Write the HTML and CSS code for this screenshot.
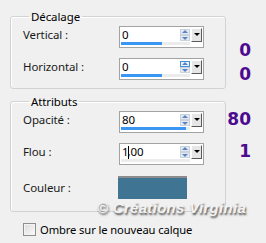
FILE: index.html
```html
<!DOCTYPE html>
<html lang="fr">
<head>
    <meta charset="UTF-8">
    <title>Ombre portée</title>
    <link rel="stylesheet" href="styles.css">
</head>
<body>
    <div class="dialog">
        <div class="groups">
            <!-- Décalage -->
            <fieldset class="group group-offset">
                <legend>Décalage</legend>
                <div class="row">
                    <span class="label">Vertical :</span>
                    <div class="spin">
                        <div class="spin-top">
                            <span class="spin-text">0</span>
                            <span class="arrows"><i class="up"></i><i class="down"></i></span>
                            <span class="drop"></span>
                        </div>
                        <div class="track"><div class="fill" style="width: 41px"></div></div>
                    </div>
                </div>
                <div class="row">
                    <span class="label">Horizontal :</span>
                    <div class="spin">
                        <div class="spin-top">
                            <span class="spin-text">0</span>
                            <span class="arrows hot"><i class="up"></i><i class="down"></i></span>
                            <span class="drop"></span>
                        </div>
                        <div class="track"><div class="fill" style="width: 41px"></div></div>
                    </div>
                </div>
            </fieldset>

            <!-- Attributs -->
            <fieldset class="group group-attrs">
                <legend>Attributs</legend>
                <div class="row">
                    <span class="label">Opacité :</span>
                    <div class="spin">
                        <div class="spin-top">
                            <span class="spin-text">80</span>
                            <span class="arrows"><i class="up"></i><i class="down"></i></span>
                            <span class="drop"></span>
                        </div>
                        <div class="track"><div class="fill" style="width: 65px"></div></div>
                    </div>
                </div>
                <div class="row">
                    <span class="label">Flou :</span>
                    <div class="spin">
                        <div class="spin-top">
                            <span class="spin-text">1<span class="caret"></span>,00</span>
                            <span class="arrows"><i class="up"></i><i class="down"></i></span>
                            <span class="drop"></span>
                        </div>
                        <div class="track"></div>
                    </div>
                </div>
                <div class="row row-color">
                    <span class="label">Couleur :</span>
                    <div class="swatch"></div>
                </div>
            </fieldset>

            <label class="check"><span class="box"></span>Ombre sur le nouveau calque</label>
        </div>

        <!-- valeurs à reporter -->
        <div class="values">
            <span class="val v1">0</span>
            <span class="val v2">0</span>
            <span class="val v3">80</span>
            <span class="val v4">1</span>
        </div>

        <div class="watermark">© Créations Virginia</div>
    </div>
</body>
</html>
```

FILE: styles.css
```css
body {
    margin: 0;
    background: #f0f0f0;
    font-family: "Noto Sans", "Open Sans", sans-serif;
    font-size: 11px;
    letter-spacing: -0.1px;
    color: #1a1a1a;
}

.dialog {
    position: relative;
    display: grid;
    grid-template-columns: 216px 25px;
    padding: 9px 0 0 10px;
    height: 243px;
    box-sizing: border-box;
}

/* Group boxes */
.group {
    margin: 0;
    padding: 2px 0 8px 12px;
    border: 1px solid #d3d3d3;
    border-radius: 3px;
    box-shadow: inset 1px 1px 0 #fff;
}

.group legend {
    margin-left: 6px;
    padding: 0 2px;
    line-height: 15px;
    font-size: 11.5px;
    color: #000;
}

.group-attrs {
    margin-top: 5px;
    padding-bottom: 12px;
}

.row {
    display: grid;
    grid-template-columns: 96px 85px;
    align-items: start;
}

.row + .row {
    margin-top: 10px;
}

.row-color {
    margin-top: 11px !important;
}

.label {
    line-height: 22px;
    margin-top: -2px;
    font-size: 11.5px;
}

.row-color .label {
    margin-top: 1px;
}

/* Spin control */
.spin {
    box-sizing: border-box;
    height: 22px;
    border: 1px solid #a3a3a3;
    background: #fff;
    padding: 1px 1px 2px 1px;
    display: flex;
    flex-direction: column;
}

.spin-top {
    display: flex;
    height: 14px;
}

.spin-text {
    flex: 1;
    padding-left: 1px;
    line-height: 14px;
    font-size: 11.5px;
    color: #000;
}

.caret {
    display: inline-block;
    width: 1px;
    height: 13px;
    background: #000;
    vertical-align: -3px;
    margin-right: -2px;
}

.arrows {
    width: 10px;
    margin-top: 1px;
    height: 12px;
    display: flex;
    flex-direction: column;
}

.arrows i {
    flex: 1;
    position: relative;
    background: #e4e9f0;
    border: 1px solid #c9d3df;
    box-sizing: border-box;
}

.arrows.hot .up {
    border-color: #4a8fd6;
    background: #e9f3fc;
}

.arrows i::after {
    content: "";
    position: absolute;
    left: 1px;
    border-left: 3px solid transparent;
    border-right: 3px solid transparent;
}

.arrows .up::after {
    top: 0;
    border-bottom: 3px solid #5c82c4;
}

.arrows .down::after {
    top: 1px;
    border-top: 3px solid #5c82c4;
}

.drop {
    width: 11px;
    height: 14px;
    margin-left: 1px;
    box-sizing: border-box;
    background: #e6e6e6;
    border: 1px solid;
    border-color: #fff #5a5a5a #5a5a5a #fff;
    position: relative;
}

.drop::after {
    content: "";
    position: absolute;
    left: 2px;
    top: 4px;
    border-left: 3px solid transparent;
    border-right: 3px solid transparent;
    border-top: 3px solid #000;
}

.track {
    height: 3px;
    background: #ececec;
    margin-right: 12px;
}

.fill {
    height: 3px;
    background: #3a96f2;
}

.swatch {
    width: 69px;
    height: 23px;
    margin-left: -1px;
    background: #3f7592;
    border-top: 2px solid #8c8c8c;
    box-sizing: border-box;
}

/* Checkbox */
.check {
    display: flex;
    align-items: center;
    gap: 4px;
    margin: 10px 0 0 13px;
    color: #000;
    font-size: 11.2px;
}

.box {
    width: 13px;
    height: 13px;
    box-sizing: border-box;
    border: 1px solid #8f8f8f;
    background: linear-gradient(135deg, #dcdcdc, #fafafa);
    box-shadow: inset 0 0 0 1px #f4f4f4;
}

/* Values on the right */
.values {
    display: flex;
    flex-direction: column;
    align-items: flex-end;
    font-family: "DejaVu Sans", sans-serif;
    font-weight: bold;
    font-size: 17px;
    line-height: 20px;
    letter-spacing: 0;
    color: #4c0b8f;
}

.v1 { margin-top: 31px; }
.v2 { margin-top: 4px; }
.v3 { margin-top: 25px; }
.v4 { margin-top: 12px; }

.watermark {
    position: absolute;
    left: 97px;
    top: 199px;
    font-family: "Liberation Sans", sans-serif;
    font-style: italic;
    font-weight: bold;
    font-size: 15px;
    letter-spacing: 0.3px;
    color: #f2f2f2;
    text-shadow: 1px 2px 2px #555;
}
```
